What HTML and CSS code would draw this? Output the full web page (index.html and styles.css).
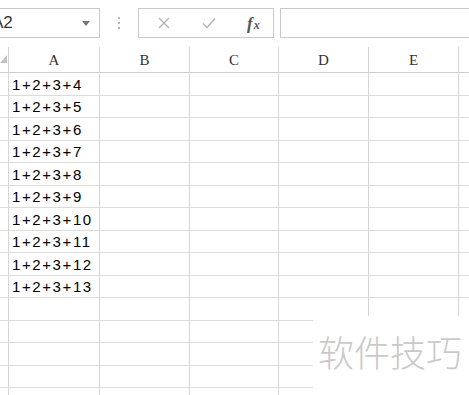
FILE: index.html
```html
<!DOCTYPE html>
<html>
<head>
<meta charset="utf-8">
<link rel="stylesheet" href="styles.css">
</head>
<body>
<div class="app">
  <div class="toolbar">
    <div class="namebox"><span class="name">A2</span><span class="arrow"></span></div>
    <div class="sep"><i></i><i></i><i></i></div>
    <div class="fxbox">
      <svg class="ico" width="14" height="14" viewBox="0 0 14 14"><path d="M2 2 L12 12 M12 2 L2 12" stroke="#b4b4b4" stroke-width="1.4" fill="none"/></svg>
      <svg class="ico" width="16" height="14" viewBox="0 0 16 14"><path d="M2 7.5 L6 11.5 L14 2.5" stroke="#b4b4b4" stroke-width="1.5" fill="none"/></svg>
      <span class="fx">f<span class="x">x</span></span>
    </div>
    <div class="formula"></div>
  </div>
  <div class="sheet">
    <div class="corner"><span class="tri"></span></div>
    <div class="ch">A</div><div class="ch">B</div><div class="ch">C</div><div class="ch">D</div><div class="ch">E</div><div class="ch last"></div>
  </div>
  <div class="rows">
    <div class="rh"></div><div class="c">1+2+3+4</div><div class="c"></div><div class="c"></div><div class="c"></div><div class="c"></div><div class="c last"></div>
    <div class="rh"></div><div class="c">1+2+3+5</div><div class="c"></div><div class="c"></div><div class="c"></div><div class="c"></div><div class="c last"></div>
    <div class="rh"></div><div class="c">1+2+3+6</div><div class="c"></div><div class="c"></div><div class="c"></div><div class="c"></div><div class="c last"></div>
    <div class="rh"></div><div class="c">1+2+3+7</div><div class="c"></div><div class="c"></div><div class="c"></div><div class="c"></div><div class="c last"></div>
    <div class="rh"></div><div class="c">1+2+3+8</div><div class="c"></div><div class="c"></div><div class="c"></div><div class="c"></div><div class="c last"></div>
    <div class="rh"></div><div class="c">1+2+3+9</div><div class="c"></div><div class="c"></div><div class="c"></div><div class="c"></div><div class="c last"></div>
    <div class="rh"></div><div class="c">1+2+3+10</div><div class="c"></div><div class="c"></div><div class="c"></div><div class="c"></div><div class="c last"></div>
    <div class="rh"></div><div class="c">1+2+3+11</div><div class="c"></div><div class="c"></div><div class="c"></div><div class="c"></div><div class="c last"></div>
    <div class="rh"></div><div class="c">1+2+3+12</div><div class="c"></div><div class="c"></div><div class="c"></div><div class="c"></div><div class="c last"></div>
    <div class="rh"></div><div class="c">1+2+3+13</div><div class="c"></div><div class="c"></div><div class="c"></div><div class="c"></div><div class="c last"></div>
    <div class="rh"></div><div class="c"></div><div class="c"></div><div class="c"></div><div class="c"></div><div class="c"></div><div class="c last"></div>
    <div class="rh"></div><div class="c"></div><div class="c"></div><div class="c"></div><div class="c"></div><div class="c"></div><div class="c last"></div>
    <div class="rh"></div><div class="c"></div><div class="c"></div><div class="c"></div><div class="c"></div><div class="c"></div><div class="c last"></div>
    <div class="rh"></div><div class="c"></div><div class="c"></div><div class="c"></div><div class="c"></div><div class="c"></div><div class="c last"></div>
    <div class="rh"></div><div class="c"></div><div class="c"></div><div class="c"></div><div class="c"></div><div class="c"></div><div class="c last"></div>
  </div>
  <div class="watermark">软件技巧</div>
</div>
</body>
</html>
```
FILE: styles.css
```css
* { box-sizing: border-box; }
html, body { margin: 0; padding: 0; background: #fff; }
body { width: 469px; height: 395px; overflow: hidden; font-family: "Liberation Sans", Arial, sans-serif; }
.app { position: relative; width: 469px; height: 395px; overflow: hidden; }

.toolbar { height: 47px; display: flex; align-items: flex-start; padding-top: 8px; }
.namebox {
  width: 110px; height: 30px; margin-left: -10px;
  border: 1px solid #c9c9c9; display: flex; align-items: center;
  justify-content: space-between; padding: 0 8px 0 0;
}
.name { font-family: "Liberation Sans", sans-serif; font-size: 17px; color: #333; margin-left: 1px; }
.arrow { width: 0; height: 0; border-left: 4px solid transparent; border-right: 4px solid transparent; border-top: 5px solid #777; margin-top: 1px; margin-right: 1px; }
.sep { width: 38px; height: 30px; display: flex; flex-direction: column; align-items: center; justify-content: center; gap: 3px; }
.sep i { display: block; width: 2px; height: 2px; background: #b8b8b8; }
.fxbox {
  width: 136px; height: 30px; border: 1px solid #c9c9c9;
  display: flex; align-items: center; padding-left: 18px; gap: 30px;
}
.fxbox .ico { display: block; }
.fx { font-family: "Liberation Serif", serif; font-style: italic; font-size: 17px; color: #555; font-weight: bold; line-height: 1; }
.fx .x { font-size: 12px; margin-left: 1px; }
.formula { flex: 1; height: 30px; margin-left: 6px; border: 1px solid #c9c9c9; border-right: none; }

.sheet, .rows {
  display: grid;
  grid-template-columns: 9px 91px 90px 89px 90px 90px 1fr;
}
.sheet { height: 26px; }
.ch, .corner {
  border-right: 1px solid #d6d6d6; border-bottom: 1px solid #cfcfcf;
  font-family: "Liberation Serif", serif; font-size: 15px; color: #333;
  display: flex; align-items: center; justify-content: center; padding-top: 2px;
}
.ch.last { border-right: none; }
.corner { position: relative; }
.tri { position: absolute; left: 0; top: 8px; width: 0; height: 0; border-left: 7px solid transparent; border-bottom: 8px solid #c2c2c2; }

.rows { grid-auto-rows: 22.5px; }
.rh, .c { border-right: 1px solid #d6d6d6; border-bottom: 1px solid #dcdcdc; }
.c.last { border-right: none; }
.c {
  font-family: "Liberation Sans", sans-serif; font-size: 15px; letter-spacing: 1.6px; color: #000;
  padding-left: 3px; display: flex; align-items: center; padding-top: 1px; white-space: nowrap;
}

.watermark {
  position: absolute; left: 313px; top: 316px; width: 160px; height: 80px;
  background: #fff; color: #cacaca;
  font-family: "Noto Sans CJK SC", sans-serif; font-weight: 300; font-size: 36px;
  padding-left: 5px; padding-top: 17px; line-height: 1;
}
```
